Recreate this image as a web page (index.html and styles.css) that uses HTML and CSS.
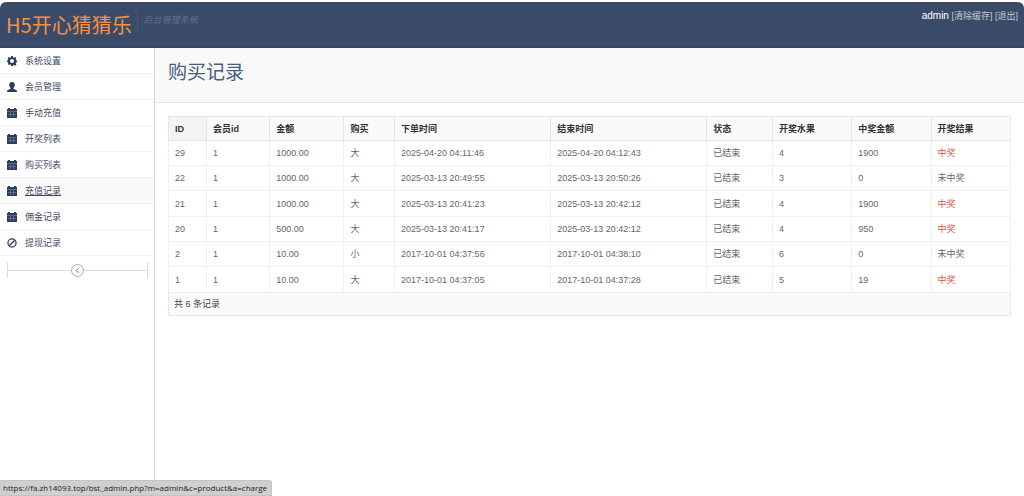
FILE: index.html
```html
<!DOCTYPE html>
<html lang="zh-CN">
  <head>
    <meta charset="utf-8">
    <title>购买记录</title>
    <meta name="viewport" content="width=device-width">
    <link rel="stylesheet" href="styles.css">
  </head>

  <body>
    <!-- icons shared by the menu -->
    <svg class="sprite" width="0" height="0">
      <symbol id="cog" viewBox="0 0 16 16">
        <path fill-rule="evenodd" d="M6.6 0h2.8l.5 2.2 1.3.6 2-1.2 1.9 2-1.2 1.9.5 1.2 2.1.5v2.700l-2.100.5-.5 1.200 1.200 2-1.900 1.900-2-1.200-1.300.5L9.400 16H6.600l-.5-2.200-1.300-.5-2 1.200-1.900-1.900 1.200-2-.5-1.200L0 9.900V7.200l1.600-.5.5-1.200L.9 3.600l1.900-2 2 1.200 1.300-.6zM8 4.800a3.200 3.200 0 1 0 0 6.400 3.200 3.200 0 0 0 0-6.400z"/>
      </symbol>
      <symbol id="user" viewBox="0 0 16 16">
        <path d="M8 0c2.900 0 4.500 1.800 4.500 4.500 0 2-.9 3.900-2.200 5v1.300c2 .9 5.700 1.600 5.700 4.200v1H0v-1c0-2.600 3.700-3.300 5.700-4.200V9.500c-1.300-1.100-2.200-3-2.200-5C3.500 1.800 5.100 0 8 0z"/>
      </symbol>
      <symbol id="calendar" viewBox="0 0 10 10">
        <path d="M1 0h2v1h4V0h2v1h1v9H0V1h1z"/>
        <path class="grid" d="M0 3.500h10M1 6.500h8M3.500 4v5M6.500 4v5"/>
      </symbol>
      <symbol id="ban" viewBox="0 0 16 16">
        <path class="line" d="M8 1.500a6.500 6.500 0 1 0 0 13 6.500 6.500 0 0 0 0-13zM3.500 12.500l9-9"/>
      </symbol>
    </svg>

    <header class="header">
      <div class="logo">H5开心猜猜乐</div>
      <div class="slogan">后台管理系统</div>
      <div class="account"><span class="name">admin</span> <a href="#">[清除缓存]</a> <a href="#">[退出]</a></div>
    </header>

    <div class="container">
      <nav class="sidebar">
        <ul class="menu">
          <li><a href="#"><svg class="icon"><use href="#cog"/></svg>系统设置</a></li>
          <li><a href="#"><svg class="icon"><use href="#user"/></svg>会员管理</a></li>
          <li><a href="#"><svg class="icon"><use href="#calendar"/></svg>手动充值</a></li>
          <li><a href="#"><svg class="icon"><use href="#calendar"/></svg>开奖列表</a></li>
          <li><a href="#"><svg class="icon"><use href="#calendar"/></svg>购买列表</a></li>
          <li class="current"><a href="#"><svg class="icon"><use href="#calendar"/></svg><span>充值记录</span></a></li>
          <li><a href="#"><svg class="icon"><use href="#calendar"/></svg>佣金记录</a></li>
          <li><a href="#"><svg class="icon"><use href="#ban"/></svg>提现记录</a></li>
        </ul>
        <div class="collapse">
          <button type="button" aria-label="收起菜单"><svg viewBox="0 0 12 12"><path d="M7 3.500L4.500 6 7 8.500"/></svg></button>
        </div>
      </nav>

      <main class="content">
        <div class="page-title"><h1>购买记录</h1></div>
        <div class="page-body">
          <table class="records">
            <colgroup>
              <col class="col-id"><col class="col-member"><col class="col-amount"><col class="col-buy">
              <col class="col-time"><col class="col-time"><col class="col-state"><col class="col-prize">
              <col class="col-prize"><col class="col-prize">
            </colgroup>
            <thead>
              <tr><th>ID</th><th>会员id</th><th>金额</th><th>购买</th><th>下单时间</th><th>结束时间</th><th>状态</th><th>开奖水果</th><th>中奖金额</th><th>开奖结果</th></tr>
            </thead>
            <tbody>
              <tr><td>29</td><td>1</td><td>1000.00</td><td>大</td><td>2025-04-20 04:11:46</td><td>2025-04-20 04:12:43</td><td>已结束</td><td>4</td><td>1900</td><td class="win">中奖</td></tr>
              <tr><td>22</td><td>1</td><td>1000.00</td><td>大</td><td>2025-03-13 20:49:55</td><td>2025-03-13 20:50:26</td><td>已结束</td><td>3</td><td>0</td><td>未中奖</td></tr>
              <tr><td>21</td><td>1</td><td>1000.00</td><td>大</td><td>2025-03-13 20:41:23</td><td>2025-03-13 20:42:12</td><td>已结束</td><td>4</td><td>1900</td><td class="win">中奖</td></tr>
              <tr><td>20</td><td>1</td><td>500.00</td><td>大</td><td>2025-03-13 20:41:17</td><td>2025-03-13 20:42:12</td><td>已结束</td><td>4</td><td>950</td><td class="win">中奖</td></tr>
              <tr><td>2</td><td>1</td><td>10.00</td><td>小</td><td>2017-10-01 04:37:56</td><td>2017-10-01 04:38:10</td><td>已结束</td><td>6</td><td>0</td><td>未中奖</td></tr>
              <tr><td>1</td><td>1</td><td>10.00</td><td>大</td><td>2017-10-01 04:37:05</td><td>2017-10-01 04:37:28</td><td>已结束</td><td>5</td><td>19</td><td class="win">中奖</td></tr>
            </tbody>
          </table>
          <div class="total">共 6 条记录</div>
        </div>
      </main>
    </div>

    <div class="status">https://fa.zh14093.top/bst_admin.php?m=admin&amp;c=product&amp;a=charge</div>
  </body>
</html>
```
FILE: styles.css
```css
* { box-sizing: border-box; }
body { margin: 0; padding-top: 2px; min-height: 100vh; display: flex; flex-direction: column;
     background: #fff; color: #666; font: 9px/14px "Liberation Sans", "Noto Sans CJK SC", sans-serif; }
a { color: inherit; text-decoration: none; }
.sprite { position: absolute; }

/* header */
.header { display: flex; align-items: flex-start; height: 46px; padding: 7px 6px 0; background: #3a4b69;
     border-bottom: 1px solid #34456a; border-radius: 6px 6px 0 0; }
.logo { padding-right: 5px; color: #f79240; font: 20px/32px "Noto Sans CJK SC", sans-serif; }
.slogan { height: 24px; padding-left: 6px; border-left: 1px solid #465878; color: #5f7190;
     font-style: italic; line-height: 22px; }
.account { margin-left: auto; color: #c3cad6; }
.account .name { color: #fff; font-size: 10px; }

.container { display: flex; flex: 1; }

/* menu */
.sidebar { width: 155px; flex: none; border-right: 1px solid #d4d4d8; }
.menu { margin: 0; padding: 0; list-style: none; }
.menu li { border-bottom: 1px solid #f0f0f0; }
.menu a { display: flex; align-items: center; gap: 8px; height: 25px; padding-left: 7px; color: #3f4c5f; }
.menu .current { background: #fafafa; }
.menu .current span { text-decoration: underline; }
.icon { width: 10px; height: 10px; fill: #2b3d5b; }
.grid { fill: none; stroke: #5d6d88; stroke-width: 1; }
.line { fill: none; stroke: #2b3d5b; stroke-width: 2; }
.collapse { display: flex; align-items: center; height: 16px; margin: 6px 6px 0 7px;
     border: solid #ddd; border-width: 0 1px; }
.collapse::before, .collapse::after { content: ""; flex: 1; height: 1px; background: #ddd; }
.collapse button { display: flex; width: 13px; height: 13px; padding: 0; background: #fff;
     border: 1px solid #aaa; border-radius: 50%; }
.collapse svg { width: 11px; height: 11px; fill: none; stroke: #555; }

/* content */
.content { flex: 1; min-width: 0; }
.page-title { height: 55px; padding: 11px 13px; background: #f9f9f9; border-bottom: 1px solid #e3e3e3; }
.page-title h1 { margin: 0; color: #485b7c; font-size: 19px; font-weight: normal; line-height: 28px; }
.page-body { padding: 13px; }
.records { width: 100%; table-layout: fixed; border-collapse: collapse; border: 1px solid #e5e5e5; }
.records th, .records td { height: 25px; padding: 0 6px; border: 1px solid #f0f0f0; text-align: left; white-space: nowrap; }
.records th { height: 24px; background: #fafafa; border-color: #e5e5e5; color: #333; }
.records th:first-child { background: #f3f3f3; }
.records tbody tr:nth-child(3n) td { height: 26px; }
.records .win { color: #d9534f; }
.col-id { width: 4.5%; }
.col-member { width: 7.5%; }
.col-amount { width: 8.8%; }
.col-buy { width: 6%; }
.col-time { width: 18.5%; }
.col-state { width: 7.8%; }
.col-prize { width: 9.4%; }
.total { height: 23px; padding: 0 5px; background: #fafafa; border: 1px solid #e5e5e5; border-top: 0;
     border-radius: 0 0 2px 2px; color: #444; line-height: 22px; }

/* link address shown by the browser */
.status { position: fixed; left: 0; bottom: 0; padding: 0 4px 0 3px; background: #cfcfcf; color: #222;
     border: 1px solid #c4c4c4; border-left: 0; border-radius: 0 3px 0 0;
     font-family: "Open Sans", sans-serif; font-size: 8px; }
```
